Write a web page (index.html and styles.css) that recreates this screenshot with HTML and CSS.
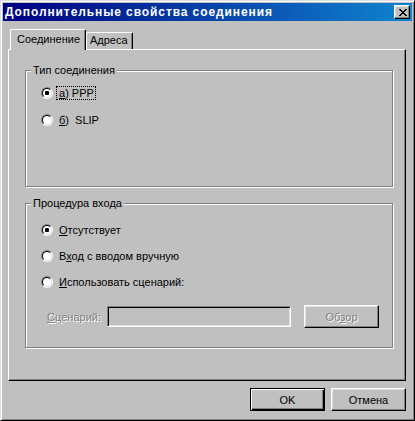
FILE: index.html
```html
<!DOCTYPE html>
<html lang="ru">
<head>
<meta charset="utf-8">
<title>Дополнительные свойства соединения</title>
<link rel="stylesheet" href="styles.css">
</head>
<body>
<div class="window">
  <div class="titlebar">
    <span class="title">Дополнительные свойства соединения</span>
    <span class="close">
      <svg width="8" height="7" viewBox="0 0 8 7" shape-rendering="crispEdges"><path fill="#000" d="M0 0h2v1h-2z M6 0h2v1h-2z M1 1h2v1h-2z M5 1h2v1h-2z M2 2h4v1h-4z M3 3h2v1h-2z M2 4h4v1h-4z M1 5h2v1h-2z M5 5h2v1h-2z M0 6h2v1h-2z M6 6h2v1h-2z"/></svg>
    </span>
  </div>
  <div class="tabs">
    <div class="tab active">Соединение</div>
    <div class="tab second">Адреса</div>
  </div>
  <div class="panel">
    <div class="group g1">
      <div class="legend">Тип соединения</div>
      <div class="row first">
        <span class="radio"><span class="ring"><span class="dot"></span></span></span>
        <span class="lbl focus"><u>а</u>) PPP</span>
      </div>
      <div class="row next1">
        <span class="radio"><span class="ring"></span></span>
        <span class="lbl"><u>б</u>)&nbsp; SLIP</span>
      </div>
    </div>
    <div class="group g2">
      <div class="legend">Процедура входа</div>
      <div class="row first2">
        <span class="radio"><span class="ring"><span class="dot"></span></span></span>
        <span class="lbl"><u>О</u>тсутствует</span>
      </div>
      <div class="row next2">
        <span class="radio"><span class="ring"></span></span>
        <span class="lbl">В<u>х</u>од с вводом вручную</span>
      </div>
      <div class="row next2">
        <span class="radio"><span class="ring"></span></span>
        <span class="lbl"><u>И</u>спользовать сценарий:</span>
      </div>
      <div class="script-row">
        <span class="script-label disabled"><u>С</u>ценарий:</span>
        <span class="input"></span>
        <span class="btn browse disabled">Об<u>з</u>ор</span>
      </div>
    </div>
  </div>
  <div class="buttons">
    <span class="btn default">OK</span>
    <span class="btn">Отмена</span>
  </div>
</div>
</body>
</html>
```

FILE: styles.css
```css
html, body {
  margin: 0;
  padding: 0;
  background: #c0c0c0;
}

.window {
  width: 415px;
  height: 421px;
  box-sizing: border-box;
  background: #c0c0c0;
  border: 1px solid;
  border-color: #dfdfdf #000 #000 #dfdfdf;
  box-shadow: inset 1px 1px 0 #fff, inset -1px -1px 0 #808080;
  padding: 2px;
  font-family: "Liberation Sans", Arial, sans-serif;
  font-size: 11px;
  color: #000;
  display: flex;
  flex-direction: column;
}

.titlebar {
  height: 18px;
  background: linear-gradient(to right, #000080, #1084d0);
  display: flex;
  align-items: center;
  justify-content: space-between;
  padding: 0 2px 0 2px;
}

.title {
  color: #fff;
  font-weight: bold;
  font-size: 12px;
  line-height: 18px;
  letter-spacing: 0.9px;
  white-space: nowrap;
}

.close {
  width: 16px;
  height: 14px;
  box-sizing: border-box;
  background: #c0c0c0;
  border: 1px solid;
  border-color: #fff #000 #000 #fff;
  box-shadow: inset -1px -1px 0 #808080, inset 1px 1px 0 #dfdfdf;
  display: flex;
  align-items: center;
  justify-content: center;
  padding-left: 1px;
}

.close svg {
  display: block;
}

.tabs {
  display: flex;
  align-items: flex-end;
  height: 20px;
  margin: 8px 0 0 7px;
  position: relative;
  z-index: 1;
}

.tab {
  box-sizing: border-box;
  background: #c0c0c0;
  border: 1px solid;
  border-bottom: none;
  border-color: #fff #000 #000 #fff;
  border-top-left-radius: 2px;
  border-top-right-radius: 2px;
  box-shadow: inset -1px 0 0 #808080;
  line-height: 13px;
  white-space: nowrap;
}

.tab.active {
  width: 76px;
  height: 21px;
  margin-bottom: -1px;
  padding: 3px 0 0 6px;
}

.tab.second {
  width: 47px;
  height: 17px;
  padding: 1px 0 0 3px;
}

.panel {
  box-sizing: border-box;
  width: 398px;
  height: 332px;
  margin-left: 5px;
  border: 1px solid;
  border-color: #fff #000 #000 #fff;
  box-shadow: inset -1px -1px 0 #808080;
  padding: 20px 0 0 16px;
}

.group {
  box-sizing: border-box;
  width: 368px;
  border: 1px solid #808080;
  box-shadow: inset 1px 1px 0 #fff, 1px 1px 0 #fff;
  display: flex;
  flex-direction: column;
}

.g1 {
  height: 117px;
}

.g2 {
  height: 145px;
  margin-top: 16px;
}

.legend {
  align-self: flex-start;
  margin: -7px 0 0 5px;
  padding: 0 2px;
  background: #c0c0c0;
  line-height: 13px;
  white-space: nowrap;
}

.row {
  display: flex;
  align-items: center;
  height: 14px;
  margin-left: 15px;
}

.row.first { margin-top: 9px; }
.row.next1 { margin-top: 13px; }
.row.first2 { margin-top: 13px; }
.row.next2 { margin-top: 12px; }

.radio {
  width: 12px;
  height: 12px;
  box-sizing: border-box;
  border-radius: 50%;
  border: 1px solid;
  border-color: #808080 #fff #fff #808080;
  flex: none;
}

.ring {
  display: flex;
  align-items: center;
  justify-content: center;
  width: 10px;
  height: 10px;
  box-sizing: border-box;
  border-radius: 50%;
  border: 1px solid;
  border-color: #000 #dfdfdf #dfdfdf #000;
  background: #fff;
}

.dot {
  width: 4px;
  height: 4px;
  border-radius: 1px;
  background: #000;
}

.lbl {
  margin-left: 4px;
  padding: 0 1px 0 2px;
  line-height: 12px;
  white-space: nowrap;
}

.lbl.focus {
  outline: 1px dotted #000;
  outline-offset: 0;
}

.script-row {
  display: flex;
  align-items: center;
  height: 23px;
  margin-top: 16px;
}

.script-label {
  box-sizing: border-box;
  width: 81px;
  padding-right: 6px;
  text-align: right;
  white-space: nowrap;
}

.disabled {
  color: #808080;
  text-shadow: 1px 1px 0 #fff;
}

.input {
  box-sizing: border-box;
  width: 184px;
  height: 21px;
  background: #c0c0c0;
  border: 1px solid;
  border-color: #808080 #fff #fff #808080;
  box-shadow: inset 1px 1px 0 #000, inset -1px -1px 0 #dfdfdf;
}

.btn {
  box-sizing: border-box;
  width: 75px;
  height: 23px;
  display: flex;
  align-items: center;
  justify-content: center;
  background: #c0c0c0;
  border: 1px solid;
  border-color: #fff #000 #000 #fff;
  box-shadow: inset -1px -1px 0 #808080, inset 1px 1px 0 #dfdfdf;
  white-space: nowrap;
}

.btn.browse {
  margin-left: 13px;
}

.btn.default {
  border-color: #000;
  box-shadow: inset 1px 1px 0 #fff, inset -1px -1px 0 #000, inset -2px -2px 0 #808080;
}

.buttons {
  display: flex;
  justify-content: flex-end;
  gap: 6px;
  margin: 7px 6px 0 0;
}
```
